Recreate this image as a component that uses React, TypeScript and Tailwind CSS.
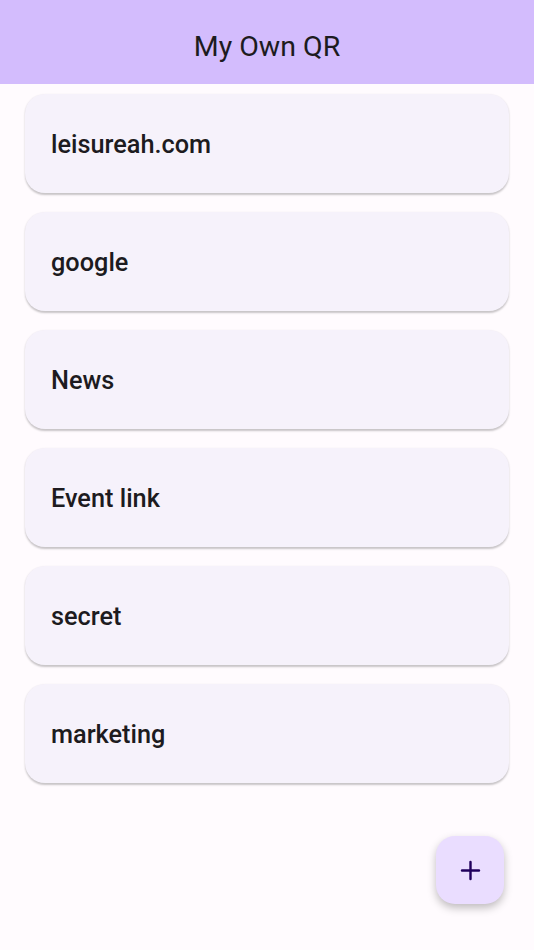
import { Plus } from "lucide-react";

const items = ["leisureah.com", "google", "News", "Event link", "secret", "marketing"];

export default function App() {
  return (
    <div
      className="relative h-[950px] w-[534px] overflow-hidden bg-[#fffbfe]"
      style={{ fontFamily: "Roboto, 'Liberation Sans', sans-serif" }}
    >
      <header className="flex h-[84px] items-center justify-center bg-[#d3bcfd] pt-[10px]">
        <h1 className="text-[28.5px] font-normal leading-none text-[#1d1b20]">My Own QR</h1>
      </header>

      <ul className="flex flex-col gap-[19px] px-[25px] pt-[10px]">
        {items.map((item) => (
          <li
            key={item}
            className="flex h-[99px] items-center rounded-[20px] bg-[#f6f2fb] px-[26px] pt-[2px] shadow-[0_1.5px_2px_rgba(0,0,0,0.22)]"
          >
            <span className="text-[25.3px] font-medium text-[#1d1b20]">{item}</span>
          </li>
        ))}
      </ul>

      <button className="absolute bottom-[46px] right-[30px] flex h-[68px] w-[68px] items-center justify-center rounded-[19px] bg-[#eaddff] shadow-[0_4px_8px_rgba(0,0,0,0.25)]">
        <Plus className="h-[29px] w-[29px] text-[#21005d]" strokeWidth={2} />
      </button>
    </div>
  );
}
